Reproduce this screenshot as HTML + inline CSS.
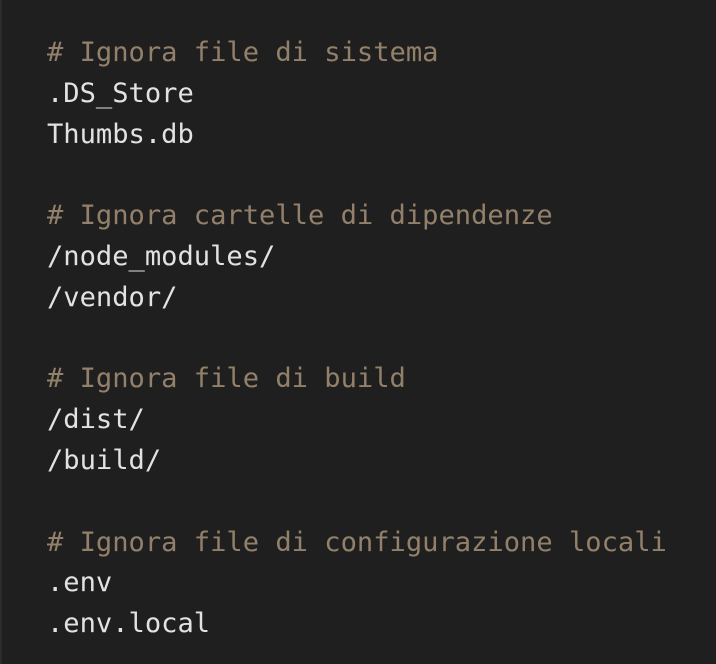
<!DOCTYPE html>
<html><head><style>
html,body{margin:0;padding:0;}
body{width:716px;height:664px;background:#1f1f1f;overflow:hidden;position:relative;border-left:2px solid #2b2b2b;box-sizing:border-box;}
pre{margin:0;position:absolute;left:45px;top:33px;font-family:"DejaVu Sans Mono",monospace;font-size:27.1px;line-height:40.8px;color:#e2e2e2;}
.c{color:#93806a;}
</style></head><body><pre><span class="c"># Ignora file di sistema</span>
.DS_Store
Thumbs.db

<span class="c"># Ignora cartelle di dipendenze</span>
/node_modules/
/vendor/

<span class="c"># Ignora file di build</span>
/dist/
/build/

<span class="c"># Ignora file di configurazione locali</span>
.env
.env.local</pre></body></html>
